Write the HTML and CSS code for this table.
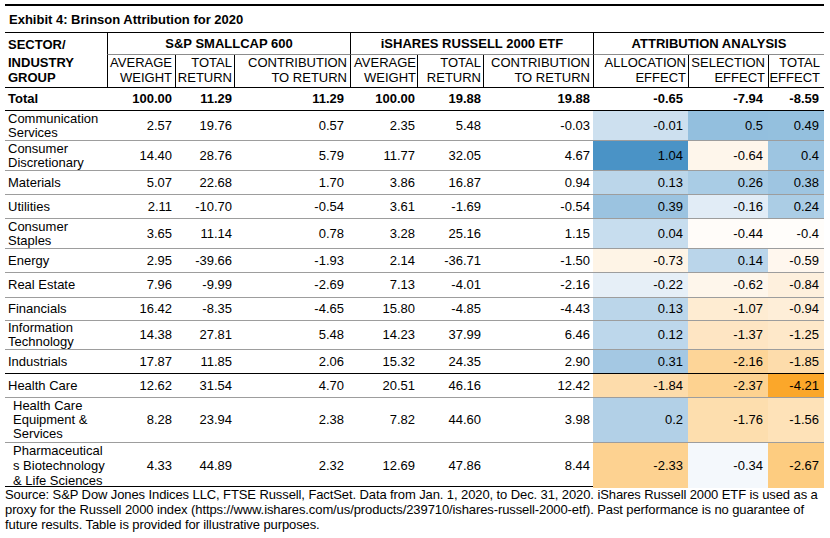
FILE: index.html
```html
<!DOCTYPE html>
<html lang="en">
<head>
<meta charset="utf-8">
<title>Exhibit 4: Brinson Attribution for 2020</title>
<link rel="stylesheet" href="styles.css">
</head>
<body>
<div class="exhibit">
  <div class="title">Exhibit 4: Brinson Attribution for 2020</div>

  <div class="head">
    <div class="sector-top">SECTOR/</div>
    <div class="grp g1">S&amp;P SMALLCAP 600</div>
    <div class="grp g2">iSHARES RUSSELL 2000 ETF</div>
    <div class="grp g3">ATTRIBUTION ANALYSIS</div>
    <div class="sector-bot">INDUSTRY<br>GROUP</div>
    <div class="sub c1 sep">AVERAGE<br>WEIGHT</div>
    <div class="sub c2">TOTAL<br>RETURN</div>
    <div class="sub c3">CONTRIBUTION<br>TO RETURN</div>
    <div class="sub c4 sep">AVERAGE<br>WEIGHT</div>
    <div class="sub c5">TOTAL<br>RETURN</div>
    <div class="sub c6">CONTRIBUTION<br>TO RETURN</div>
    <div class="sub c7 sep">ALLOCATION<br>EFFECT</div>
    <div class="sub c8">SELECTION<br>EFFECT</div>
    <div class="sub c9">TOTAL<br>EFFECT</div>
  </div>

  <div class="row total h23">
    <div class="name">Total</div>
    <div>100.00</div><div>11.29</div><div>11.29</div><div>100.00</div><div>19.88</div><div>19.88</div><div>-0.65</div><div>-7.94</div><div>-8.59</div>
  </div>

  <div class="row h30">
    <div class="name">Communication<br>Services</div>
    <div>2.57</div><div>19.76</div><div>0.57</div><div>2.35</div><div>5.48</div><div>-0.03</div>
    <div style="background:#cde0ef">-0.01</div><div style="background:#93bfde">0.5</div><div style="background:#94c0de">0.49</div>
  </div>

  <div class="row h30">
    <div class="name">Consumer<br>Discretionary</div>
    <div>14.40</div><div>28.76</div><div>5.79</div><div>11.77</div><div>32.05</div><div>4.67</div>
    <div style="background:#4a93c6">1.04</div><div style="background:#fef6eb">-0.64</div><div style="background:#9dc5e1">0.4</div>
  </div>

  <div class="row h24">
    <div class="name">Materials</div>
    <div>5.07</div><div>22.68</div><div>1.70</div><div>3.86</div><div>16.87</div><div>0.94</div>
    <div style="background:#bbd6ea">0.13</div><div style="background:#a9cce5">0.26</div><div style="background:#9ec5e1">0.38</div>
  </div>

  <div class="row h24">
    <div class="name">Utilities</div>
    <div>2.11</div><div>-10.70</div><div>-0.54</div><div>3.61</div><div>-1.69</div><div>-0.54</div>
    <div style="background:#9bc3e0">0.39</div><div style="background:#e1ecf6">-0.16</div><div style="background:#abcde5">0.24</div>
  </div>

  <div class="row h30">
    <div class="name">Consumer<br>Staples</div>
    <div>3.65</div><div>11.14</div><div>0.78</div><div>3.28</div><div>25.16</div><div>1.15</div>
    <div style="background:#c7ddee">0.04</div><div style="background:#fffcf9">-0.44</div><div style="background:#fffdfa">-0.4</div>
  </div>

  <div class="row h24">
    <div class="name">Energy</div>
    <div>2.95</div><div>-39.66</div><div>-1.93</div><div>2.14</div><div>-36.71</div><div>-1.50</div>
    <div style="background:#fef4e6">-0.73</div><div style="background:#bad5ea">0.14</div><div style="background:#fff7ee">-0.59</div>
  </div>

  <div class="row h25">
    <div class="name">Real Estate</div>
    <div>7.96</div><div>-9.99</div><div>-2.69</div><div>7.13</div><div>-4.01</div><div>-2.16</div>
    <div style="background:#e6eff7">-0.22</div><div style="background:#fef6eb">-0.62</div><div style="background:#fef0dd">-0.84</div>
  </div>

  <div class="row h23">
    <div class="name">Financials</div>
    <div>16.42</div><div>-8.35</div><div>-4.65</div><div>15.80</div><div>-4.85</div><div>-4.43</div>
    <div style="background:#bbd6ea">0.13</div><div style="background:#feecd2">-1.07</div><div style="background:#feeed8">-0.94</div>
  </div>

  <div class="row h29">
    <div class="name">Information<br>Technology</div>
    <div>14.38</div><div>27.81</div><div>5.48</div><div>14.23</div><div>37.99</div><div>6.46</div>
    <div style="background:#bdd7eb">0.12</div><div style="background:#fee5c3">-1.37</div><div style="background:#fee8c9">-1.25</div>
  </div>

  <div class="row h24 rule">
    <div class="name">Industrials</div>
    <div>17.87</div><div>11.85</div><div>2.06</div><div>15.32</div><div>24.35</div><div>2.90</div>
    <div style="background:#a4c8e3">0.31</div><div style="background:#fdd598">-2.16</div><div style="background:#fddcab">-1.85</div>
  </div>

  <div class="row h24">
    <div class="name">Health Care</div>
    <div>12.62</div><div>31.54</div><div>4.70</div><div>20.51</div><div>46.16</div><div>12.42</div>
    <div style="background:#fddcab">-1.84</div><div style="background:#fdd290">-2.37</div><div style="background:#fba72a">-4.21</div>
  </div>

  <div class="row h45">
    <div class="name sub-name">Health Care<br>Equipment &amp;<br>Services</div>
    <div>8.28</div><div>23.94</div><div>2.38</div><div>7.82</div><div>44.60</div><div>3.98</div>
    <div style="background:#b2d0e7">0.2</div><div style="background:#fddeae">-1.76</div><div style="background:#fee2b8">-1.56</div>
  </div>

  <div class="row h44 rule">
    <div class="name sub-name wide">Pharmaceutical<br>s Biotechnology<br>&amp; Life Sciences</div>
    <div>4.33</div><div>44.89</div><div>2.32</div><div>12.69</div><div>47.86</div><div>8.44</div>
    <div style="background:#fdd291">-2.33</div><div style="background:#f4f8fc">-0.34</div><div style="background:#fdcc80">-2.67</div>
  </div>

  <p class="source">Source: S&amp;P Dow Jones Indices LLC, FTSE Russell, FactSet. Data from Jan. 1, 2020, to Dec. 31, 2020. iShares Russell 2000 ETF is used as a<br>proxy for the Russell 2000 index (https://www.ishares.com/us/products/239710/ishares-russell-2000-etf). Past performance is no guarantee of<br>future results. Table is provided for illustrative purposes.</p>
</div>
</body>
</html>
```

FILE: styles.css
```css
* { box-sizing: border-box; }

body {
  margin: 0;
  background: #fff;
  color: #000;
  font-family: "Liberation Sans", Arial, sans-serif;
  font-size: 13px;
}

.exhibit {
  width: 824px;
  padding: 4px 0 0 5px;
}

.title {
  height: 29px;
  border-top: 2px solid #000;
  border-bottom: 1px solid #000;
  font-weight: bold;
  display: flex;
  align-items: center;
  padding-left: 4px;
}

.head,
.row {
  display: grid;
  grid-template-columns: 102px 68px 59px 116px 67px 66px 110px 95px 80px 56px;
}

.head {
  grid-template-rows: 22px 32px;
  height: 55px;
  border-bottom: 1px solid #000;
}

.sector-top,
.sector-bot {
  font-weight: bold;
  padding-left: 3px;
  line-height: 15px;
  display: flex;
  align-items: center;
}

.sector-bot {
  align-items: flex-start;
  padding-top: 0;
}

.grp {
  grid-column: span 3;
  border-left: 1px solid #000;
  border-bottom: 1px solid #8c8c8c;
  font-weight: bold;
  text-align: center;
  display: flex;
  align-items: center;
  justify-content: center;
}

.sub {
  border-left: 1px solid #000;
  text-align: right;
  line-height: 15px;
  display: flex;
  flex-direction: column;
  justify-content: center;
  padding-bottom: 2px;
}

.sub.c1 { padding-right: 3px; }
.sub.c2 { padding-right: 2px; }
.sub.c3 { padding-right: 3px; }
.sub.c4 { padding-right: 1px; }
.sub.c5 { padding-right: 2px; }
.sub.c6 { padding-right: 3px; }
.sub.c7 { padding-right: 2px; }
.sub.c8 { padding-right: 3px; }
.sub.c9 { padding-right: 4px; }

.row {
  border-bottom: 1px solid #9d9d9d;
}

.row.total,
.row.rule {
  border-bottom-color: #000;
}

.row.total { font-weight: bold; }

.h23 { height: 23px; }
.h24 { height: 24px; }
.h25 { height: 25px; }
.h29 { height: 29px; }
.h30 { height: 30px; }
.h44 { height: 44px; }
.h45 { height: 45px; }

.row > div {
  display: flex;
  align-items: center;
  justify-content: flex-end;
  line-height: 14px;
}

.row > div:nth-child(2) { padding-right: 3px; }
.row > div:nth-child(3) { padding-right: 2px; }
.row > div:nth-child(4) { padding-right: 6px; }
.row > div:nth-child(5) { padding-right: 2px; }
.row > div:nth-child(6) { padding-right: 2px; }
.row > div:nth-child(7) { padding-right: 3px; }
.row > div:nth-child(8),
.row > div:nth-child(9),
.row > div:nth-child(10) { padding-right: 5px; }

.row > .name {
  justify-content: flex-start;
  padding-left: 3px;
  white-space: nowrap;
}

.row > .sub-name { padding-left: 8px; }
.row > .wide { line-height: 15px; }

.source {
  margin: 0;
  line-height: 15px;
  white-space: nowrap;
  letter-spacing: -0.1px;
}
```
